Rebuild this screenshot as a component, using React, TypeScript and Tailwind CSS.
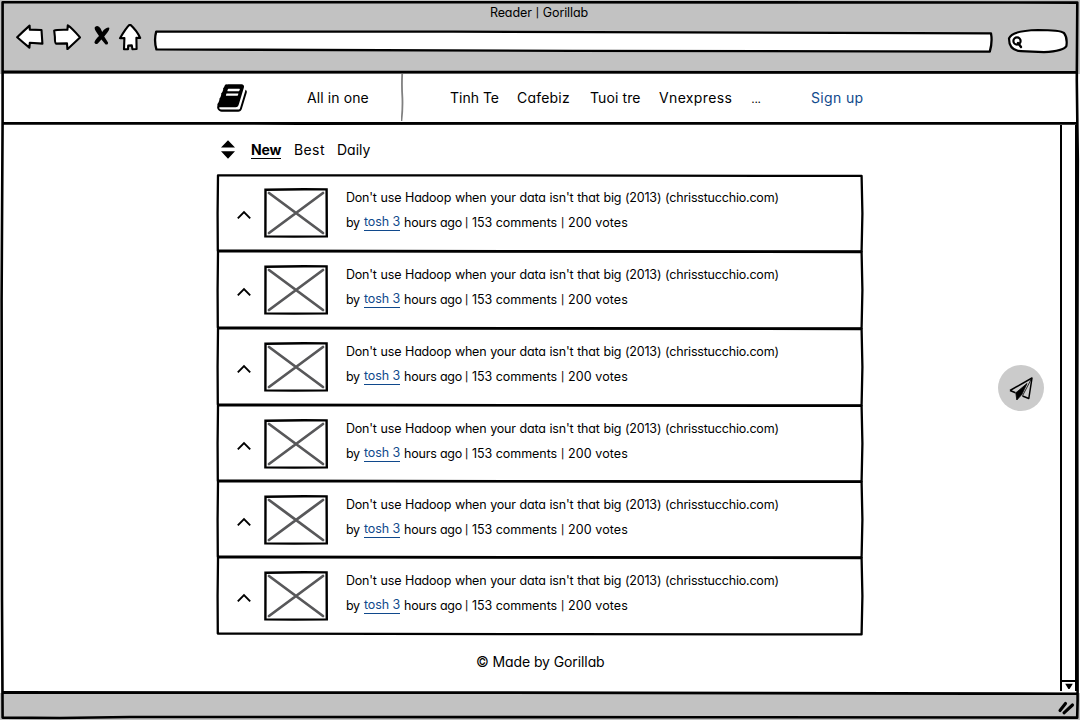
import type { ReactNode } from "react";

function Rule({ d }: { d: string }) {
  return (
    <svg className="block h-[4px] w-full shrink-0" viewBox="0 0 1080 4" preserveAspectRatio="none" fill="none">
      <path d={d} stroke="#000" strokeWidth="2.8" />
    </svg>
  );
}

function WindowFrame() {
  return (
    <svg className="pointer-events-none absolute inset-0 h-full w-full" viewBox="0 0 1080 720" fill="none" stroke="#000" strokeWidth="2.6" strokeLinejoin="round">
      <path d="M2.6 2.2 L540 2.2 L1077.3 2.6 L1076.8 80 L1077.8 160 L1077.2 420 L1077.6 700 L1077.2 717.6 L700 717.2 L130 717 L60 718 L2.6 717.6 L2 600 L1.6 300 L2.6 120 Z" />
    </svg>
  );
}

function BackIcon() {
  return (
    <svg className="h-[26px] w-[28px] shrink-0" viewBox="0 0 28 26" fill="#fff" stroke="#000" strokeWidth="2.1" strokeLinejoin="round">
      <path d="M1.2 13.2 Q7 7.5 13.6 1.6 L13.8 5.6 L25.5 6 L26.4 19.6 L13.8 18.8 L13.4 23.6 Q7.5 18.8 1.2 13.2 Z" />
    </svg>
  );
}

function ForwardIcon() {
  return (
    <svg className="ml-[9px] h-[26px] w-[28px] shrink-0" viewBox="0 0 28 26" fill="#fff" stroke="#000" strokeWidth="2.1" strokeLinejoin="round">
      <path d="M1.2 6.6 Q3 5.6 14.4 5.8 L14.8 1.4 Q18.5 3.6 27 13.4 L14.4 25.2 L14 19.4 L3 19.6 Q1.8 19 1.9 13 Z" />
    </svg>
  );
}

function StopIcon() {
  return (
    <svg className="ml-[12px] h-[26px] w-[17px] shrink-0" viewBox="0 0 17 26">
      <path d="M2 3 Q5.2 .6 7.6 4.6 L9.2 8 Q12 3.4 16 3.4 Q17.2 5 14.4 8.4 L11.2 12.4 L15 18.4 Q15.4 21 12.6 20.4 L8.4 15.6 L4.8 19.4 Q2.4 20.8 1.4 18.4 Q2 15.6 6 12 L3 7.4 Q1 4.6 2 3 Z" fill="#000" />
    </svg>
  );
}

function HomeIcon() {
  return (
    <svg className="ml-[8px] h-[28px] w-[24px] shrink-0" viewBox="0 0 24 28" fill="#fff" stroke="#000" strokeWidth="2.1" strokeLinejoin="round">
      <path d="M12 .4 Q8.4 3.2 2 14.2 L6.4 14 L6 25.2 L10 25.2 L10.2 21.6 L13.8 21.4 L14.4 25.2 L18.6 25 L18.4 13.8 L22.2 14 Q19 6.6 12 .4 Z" />
    </svg>
  );
}

function AddressBar() {
  return (
    <div className="mt-[5px] ml-[11px] h-[24px] w-[841px] shrink-0">
      <svg className="block h-full w-full" viewBox="0 0 841 24" fill="#fff" stroke="#000" strokeWidth="2.3" strokeLinejoin="round">
        <path d="M3.2 2.6 L300 2.6 L838 4.4 Q839.6 13 836.8 22.6 L420 21.8 L3.4 20.4 Q.8 11 3.2 2.6 Z" />
      </svg>
    </div>
  );
}

function SearchBox() {
  return (
    <svg className="ml-[12px] mt-[4px] h-[26px] w-[62px] shrink-0" viewBox="0 0 62 26" fill="#fff" stroke="#000" strokeWidth="2.2" strokeLinecap="round">
      <path d="M3 10.5 Q6 2.6 32 2 Q54 2 58 5 Q61.6 9.5 60.4 18 Q58 23 38 24.2 Q26 23.8 15 23.2 Q3 22.5 3 10.5 Z" />
      <circle cx="11" cy="13" r="3.6" fill="none" />
      <path d="M12 15 L15 19" strokeWidth="2.4" />
    </svg>
  );
}

function BookIcon() {
  return (
    <svg className="ml-[216px] h-[32px] w-[32px] shrink-0" viewBox="0 0 1792 1792" fill="#000">
      <path d="M1703 478q40 57 18 129l-275 906q-19 64-76.500 107.500t-122.500 43.500h-923q-77 0-148.500-53.500t-99.500-131.500q-24-67-2-127 0-4 3-27t4-37q1-8-3-21.500t-3-19.500q2-11 8-21t16.500-23.500 16.500-23.500q23-38 45-91.500t30-91.500q3-10 .5-30t-.5-28q3-11 17-28t17-23q21-36 42-92t25-90q1-9-2.500-32t.5-28q4-13 22-30.500t22-22.500q19-26 42.500-84.500t27.500-96.500q1-8-3-25.500t-2-26.500q2-8 9-18t18-23 17-21q8-12 16.500-30.500t15-35 16-36 19.500-32 26.500-23.500 36-11.500 47.500 5.500l-1 3q38-9 51-9h761q74 0 114 56t18 130l-274 906q-36 119-71.500 153.500t-128.500 34.500h-869q-27 0-38 15-11 16-1 43 24 70 144 70h923q29 0 56-15.500t35-41.500l300-987q7-22 5-57 38 15 59 43zm-1064 2q-4 13 2 22.500t20 9.500h608q13 0 25.500-9.500t16.500-22.500l21-64q4-13-2-22.500t-20-9.500h-608q-13 0-25.500 9.500t-16.500 22.500zm-83 256q-4 13 2 22.500t20 9.500h608q13 0 25.500-9.500t16.500-22.500l21-64q4-13-2-22.500t-20-9.500h-608q-13 0-25.500 9.500t-16.500 22.500z" />
    </svg>
  );
}

function Thumbnail() {
  return (
    <svg className="mt-[3px] ml-[13px] h-[50px] w-[64px] shrink-0" viewBox="0 0 64 50" fill="none">
      <path d="M1.5 1.7 L40 1.2 L62.6 1.4 L62.8 48.4 L30 48.6 L1.4 48.4 Z" fill="#fff" stroke="#000" strokeWidth="2.4" />
      <path d="M5 5 L59 45 M5 45 L59 5" stroke="#58585a" strokeWidth="2.8" strokeLinecap="round" />
    </svg>
  );
}

function Pipe({ className = "" }: { className?: string }) {
  return <span className={`w-[3px] text-center text-[9.5px] font-medium ${className}`}>|</span>;
}

function Story({ className }: { className: string }) {
  return (
    <li className={`relative flex shrink-0 items-start ${className}`}>
      <svg className="absolute inset-x-0 top-0 h-[calc(100%+3px)] w-full" viewBox="0 0 648 80" preserveAspectRatio="none" fill="none">
        <path d="M2 1.4 L300 1.5 L645.6 2 L646.4 40 L645.6 78.4 L350 78.2 L1.8 77.6 L1.600 40 Z" stroke="#000" strokeWidth="2.3" strokeLinejoin="round" />
      </svg>
      <svg className="mt-[25px] ml-[21px] h-[10px] w-[14px] shrink-0" viewBox="0 0 14 10" fill="none">
        <path d="M.8 8.300 L7 2 L13.2 8.300" stroke="#000" strokeWidth="1.900" />
      </svg>
      <Thumbnail />
      <div className="ml-[18px] text-[12.5px] leading-[25px] whitespace-nowrap">
        <p className="tracking-[-0.2px] [word-spacing:0.5px]">
          Don't use Hadoop when your data isn't that big (2013) (chrisstucchio.com)
        </p>
        <p className="flex">
          <span className="w-[18px] tracking-[-0.3px]">by</span>
          <a className="flex w-[37px] items-center tracking-[-0.1px] text-[#10498c]">
            <span className="border-b border-[#10498c] leading-[16px]">tosh 3</span>
          </a>
          <span className="ml-[3px] w-[61px] tracking-[-0.2px]">hours ago</span>
          <Pipe />
          <span className="ml-[4px] w-[89px] tracking-[-0.05px]">153 comments</span>
          <Pipe />
          <span className="ml-[4px] tracking-[0.1px]">200 votes</span>
        </p>
      </div>
    </li>
  );
}

function NavLink({ className, children }: { className: string; children: ReactNode }) {
  return <a className={`shrink-0 whitespace-nowrap ${className}`}>{children}</a>;
}

export default function App() {
  return (
    <div className="relative flex h-[720px] w-[1080px] flex-col overflow-hidden bg-white font-[Inter,sans-serif] text-black [font-feature-settings:'cv11']">
      <header className="flex h-[74px] shrink-0 flex-col bg-[#c2c2c2]">
        <h1 className="flex h-[24px] shrink-0 items-center justify-center pt-[3px] text-[12.5px] tracking-[-0.1px]">
          <span className="flex items-center gap-[4px] pr-[2px]">
            Reader <Pipe /> Gorillab
          </span>
        </h1>
        <div className="flex h-[46px] items-start pl-[16px]">
          <BackIcon />
          <ForwardIcon />
          <StopIcon />
          <HomeIcon />
          <AddressBar />
          <SearchBox />
        </div>
        <Rule d="M2 2 L540 2.2 L1078 2.400" />
      </header>

      <div className="flex h-[51px] shrink-0 flex-col">
        <nav className="flex h-[47px] items-center text-[14px]">
          <BookIcon />
          <NavLink className="ml-[59px] w-[94px] tracking-[0.1px]">All in one</NavLink>
          <svg className="h-full w-[4px] shrink-0" viewBox="0 0 4 47" preserveAspectRatio="none" fill="none">
            <path d="M1.200 0 Q.6 12 1.400 24 Q1.800 36 .4 47" stroke="#808080" strokeWidth="1.800" />
          </svg>
          <NavLink className="ml-[45px] w-[67px]">Tinh Te</NavLink>
          <NavLink className="w-[73px] tracking-[0.2px]">Cafebiz</NavLink>
          <NavLink className="w-[69px] tracking-[0.1px]">Tuoi tre</NavLink>
          <NavLink className="w-[92px] tracking-[0.35px]">Vnexpress</NavLink>
          <NavLink className="w-[60px] font-light tracking-[-0.8px]">...</NavLink>
          <NavLink className="tracking-[0.35px] text-[#10498c]">Sign up</NavLink>
        </nav>
        <Rule d="M2 2.300 L300 2.500 L1078 2.300" />
      </div>

      <div className="flex h-[566px] shrink-0">
        <main className="flex w-[1060px] shrink-0 flex-col pl-[216px]">
          <div className="flex h-[49px] shrink-0 items-center pl-[5px] text-[14px]">
            <svg className="h-[20px] w-[14px] shrink-0" viewBox="0 0 14 20" fill="#000">
              <path d="M0 7.500 L7 .3 L14 7.500 Z M0 11.300 L14 11.300 L7 18.700 Z" />
            </svg>
            <a className="ml-[16px] w-[43px] tracking-[-0.2px]">
              <span className="inline-block border-b border-black leading-[17px] font-bold">New</span>
            </a>
            <a className="w-[43px] tracking-[0.4px]">Best</a>
            <a>Daily</a>
          </div>
          <ul className="flex w-[648px] shrink-0 flex-col">
            <Story className="h-[76px] pt-[11px]" />
            <Story className="h-[77px] pt-[12px]" />
            <Story className="h-[77px] pt-[12px]" />
            <Story className="h-[76px] pt-[12px]" />
            <Story className="h-[76px] pt-[12px]" />
            <Story className="h-[77px] pt-[12px]" />
          </ul>
          <footer className="mt-[19px] pl-[260px] text-[14px] leading-[20px] tracking-[-0.1px]">© Made by Gorillab</footer>
        </main>
        <aside className="flex w-[17px] flex-col justify-end border-x-2 border-black">
          <div className="flex h-[11px] items-center justify-center border-t-2 border-black">
            <svg className="h-[7px] w-[8px]" viewBox="0 0 8 7">
              <path d="M.2 .8 L7.800 .8 L4.600 6 L3.400 6 Z" fill="#000" />
            </svg>
          </div>
        </aside>
      </div>

      <div className="flex h-[29px] shrink-0 flex-col bg-[linear-gradient(#fff_2px,#c2c2c2_2px)]">
        <Rule d="M2 1.500 L500 1.700 L1078 2.800" />
        <div className="flex justify-end pt-[6px] pr-[4px]">
          <svg className="h-[15px] w-[20px]" viewBox="0 0 20 15" stroke="#000" strokeWidth="3.100" strokeLinecap="round">
            <path d="M4 9.500 L9.500 2.500 M8 11.800 L16.500 4" />
          </svg>
        </div>
      </div>

      <WindowFrame />

      <button aria-label="Send" className="absolute top-[365px] left-[998px] flex h-[46px] w-[46px] items-center justify-center rounded-full bg-[#cbcbcb]">
        <svg className="h-[26px] w-[26px]" viewBox="0 0 26 26" fill="none" stroke="#000" strokeWidth="1.500" strokeLinejoin="round">
          <path d="M2 15.500 L24 3 L20.800 23.500 L14.500 21 M2 15.500 L7.500 17.800" />
          <path d="M7.800 17.800 L19 8.500 L13.800 19.500 L8.800 25 Z" fill="#000" strokeWidth=".8" />
          <path d="M14.500 20.800 L22.800 5" strokeWidth=".8" />
        </svg>
      </button>
    </div>
  );
}
